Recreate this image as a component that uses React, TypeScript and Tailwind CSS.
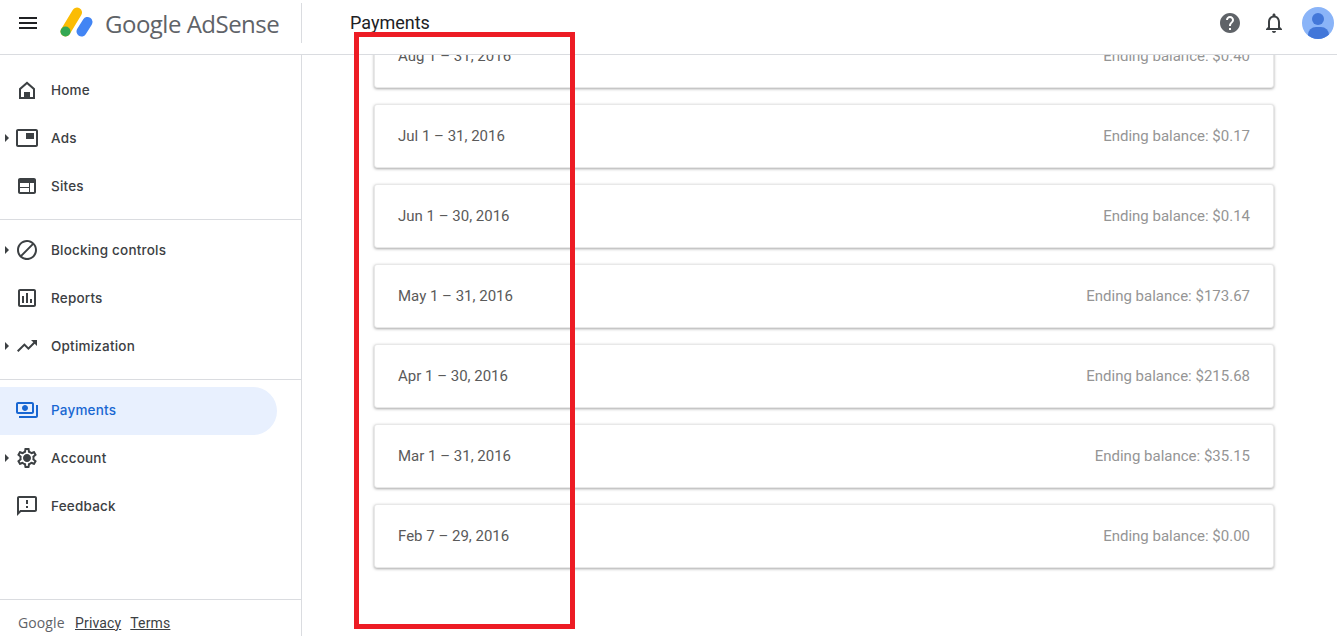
import type { ReactNode } from 'react';

const ICON = {
  menu: 'M3 18h18v-2H3v2zm0-5h18v-2H3v2zm0-7v2h18V6H3z',
  home: 'M12 3.5 4 10.5V21h16V10.5zM12 6.2l6 5.2V19H6v-7.6zM9 14h6v5H9z',
  ads: 'M19 7h-8v6h8V7zm2-4H3c-1.1 0-2 .9-2 2v14c0 1.1.9 1.98 2 1.98h18c1.1 0 2-.88 2-1.98V5c0-1.1-.9-2-2-2zm0 16.01H3V4.98h18v14.03z',
  sites: 'M19 4H5c-1.1 0-2 .9-2 2v12c0 1.1.9 2 2 2h14c1.1 0 2-.9 2-2V6c0-1.1-.9-2-2-2zm-5 14H5v-4h9v4zm0-5H5V9h9v4zm5 5h-4V9h4v9z',
  block: 'M12 2C6.48 2 2 6.48 2 12s4.48 10 10 10 10-4.48 10-10S17.52 2 12 2zM4 12c0-4.42 3.58-8 8-8 1.85 0 3.55.63 4.9 1.69L5.69 16.9C4.63 15.55 4 13.85 4 12zm8 8c-1.85 0-3.55-.63-4.9-1.69L18.31 7.1C19.37 8.45 20 10.15 20 12c0 4.42-3.58 8-8 8z',
  reports: 'M19 3H5c-1.1 0-2 .9-2 2v14c0 1.1.9 2 2 2h14c1.1 0 2-.9 2-2V5c0-1.1-.9-2-2-2zm0 16H5V5h14v14zM7 10h2v7H7zm4-3h2v10h-2zm4 6h2v4h-2z',
  trending: 'M16 6l2.29 2.29-4.88 4.88-4-4L2 16.59 3.41 18l6-6 4 4 6.3-6.29L22 12V6z',
  payments: 'M19 14V6c0-1.1-.9-2-2-2H3c-1.1 0-2 .9-2 2v8c0 1.1.9 2 2 2h14c1.1 0 2-.9 2-2zm-2 0H3V6h14v8zm-7-7c-1.66 0-3 1.34-3 3s1.34 3 3 3 3-1.34 3-3-1.34-3-3-3zm13 0v11c0 1.1-.9 2-2 2H4v-2h17V7h2z',
  settings: 'M19.43 12.98c.04-.32.07-.64.07-.98 0-.34-.03-.66-.07-.98l2.11-1.65c.19-.15.24-.42.12-.64l-2-3.46c-.09-.16-.26-.25-.44-.25-.06 0-.12.01-.17.03l-2.49 1c-.52-.4-1.08-.73-1.69-.98l-.38-2.65C14.46 2.18 14.25 2 14 2h-4c-.25 0-.46.18-.49.42l-.38 2.65c-.61.25-1.17.59-1.69.98l-2.49-1c-.06-.02-.12-.03-.18-.03-.17 0-.34.09-.43.25l-2 3.46c-.13.22-.07.49.12.64l2.11 1.65c-.04.32-.07.65-.07.98 0 .33.03.66.07.98l-2.11 1.65c-.19.15-.24.42-.12.64l2 3.46c.09.16.26.25.44.25.06 0 .12-.01.17-.03l2.49-1c.52.4 1.08.73 1.69.98l.38 2.65c.03.24.24.42.49.42h4c.25 0 .46-.18.49-.42l.38-2.65c.61-.25 1.17-.59 1.69-.98l2.49 1c.06.02.12.03.18.03.17 0 .34-.09.43-.25l2-3.46c.12-.22.07-.49-.12-.64l-2.11-1.65zm-1.98-1.71c.04.31.05.52.05.73 0 .21-.02.43-.05.73l-.14 1.13.89.7 1.08.84-.7 1.21-1.27-.51-1.04-.42-.9.68c-.43.32-.84.56-1.25.73l-1.06.43-.16 1.13-.2 1.35h-1.4l-.19-1.35-.16-1.13-1.06-.43c-.43-.18-.83-.41-1.23-.71l-.91-.7-1.06.43-1.27.51-.7-1.21 1.08-.84.89-.7-.14-1.13c-.03-.31-.05-.54-.05-.74s.02-.43.05-.73l.14-1.13-.89-.7-1.08-.84.7-1.21 1.27.51 1.04.42.9-.68c.43-.32.84-.56 1.25-.73l1.06-.43.16-1.13.2-1.35h1.39l.19 1.35.16 1.13 1.06.43c.43.18.83.41 1.23.71l.91.7 1.06-.43 1.27-.51.7 1.21-1.07.85-.89.7.14 1.13zM12 8c-2.21 0-4 1.79-4 4s1.79 4 4 4 4-1.79 4-4-1.79-4-4-4z',
  feedback: 'M20 2H4c-1.1 0-1.99.9-1.99 2L2 22l4-4h14c1.1 0 2-.9 2-2V4c0-1.1-.9-2-2-2zm0 14H5.17L4 17.17V4h16v12zm-9-4h2v2h-2zm0-6h2v4h-2z',
  help: 'M12 2C6.48 2 2 6.48 2 12s4.48 10 10 10 10-4.48 10-10S17.52 2 12 2zm1 17h-2v-2h2v2zm2.07-7.75l-.9.92C13.45 12.9 13 13.5 13 15h-2v-.5c0-1.1.45-2.1 1.17-2.83l1.24-1.26c.37-.36.59-.86.59-1.41 0-1.1-.9-2-2-2s-2 .9-2 2H8c0-2.21 1.79-4 4-4s4 1.79 4 4c0 .88-.36 1.68-.93 2.25z',
  bell: 'M12 22c1.1 0 2-.9 2-2h-4c0 1.1.9 2 2 2zm6-6v-5c0-3.07-1.63-5.64-4.5-6.32V4c0-.83-.67-1.5-1.5-1.5s-1.5.67-1.5 1.5v.68C7.64 5.36 6 7.92 6 11v5l-2 2v1h16v-1l-2-2zm-2 1H8v-6c0-2.48 1.51-4.5 4-4.5s4 2.02 4 4.5v6z',
};

function Icon({ d, className }: { d: string; className?: string }) {
  return (
    <svg viewBox="0 0 24 24" className={className} fill="currentColor">
      <path d={d} />
    </svg>
  );
}

function NavItem({ icon, label, caret, active }: { icon: string; label: string; caret?: boolean; active?: boolean }) {
  return (
    <div
      className={
        'relative flex h-12 w-[277px] items-center rounded-r-3xl pl-[15px] ' +
        (active ? 'bg-[#e8f0fe] pb-[2px] text-[#1967d2]' : 'text-[#3c4043]')
      }
    >
      {caret && <span className="absolute left-[5px] h-0 w-0 border-y-[4px] border-l-[4px] border-y-transparent border-l-[#3c4043]" />}
      <Icon d={icon} className="h-6 w-6 shrink-0" />
      <span className="ml-3 font-['Inter',sans-serif] text-[13.5px] font-medium tracking-[0.2px]">{label}</span>
    </div>
  );
}

function NavGroup({ children, className }: { children: ReactNode; className: string }) {
  return <div className={className}>{children}</div>;
}

const statements = [
  { period: 'Aug 1 – 31, 2016', balance: '$0.40' },
  { period: 'Jul 1 – 31, 2016', balance: '$0.17' },
  { period: 'Jun 1 – 30, 2016', balance: '$0.14' },
  { period: 'May 1 – 31, 2016', balance: '$173.67' },
  { period: 'Apr 1 – 30, 2016', balance: '$215.68' },
  { period: 'Mar 1 – 31, 2016', balance: '$35.15' },
  { period: 'Feb 7 – 29, 2016', balance: '$0.00' },
];

export default function App() {
  return (
    <div className="relative flex h-screen flex-col overflow-hidden bg-white font-['Roboto',sans-serif]">
      {/* Top bar */}
      <header className="relative z-10 flex h-[55px] shrink-0 items-center border-b border-[#dadce0] bg-white pb-[8px]">
        <Icon d={ICON.menu} className="ml-4 h-6 w-6 text-[#202124]" />
        <svg viewBox="0 0 36 34" className="ml-[18px] h-[34px] w-[36px] shrink-0">
          <line x1="7.5" y1="25.5" x2="19" y2="6.5" stroke="#fbbc04" strokeWidth="10" strokeLinecap="round" />
          <circle cx="7.5" cy="25.5" r="5" fill="#34a853" />
          <line x1="23.5" y1="25.5" x2="29.5" y2="16" stroke="#4285f4" strokeWidth="10" strokeLinecap="round" />
        </svg>
        <span className="ml-[11px] w-[196px] shrink-0 pt-[2px] font-['Open_Sans',sans-serif] text-[24px] tracking-[-0.5px] text-[#5f6368]">Google AdSense</span>
        <div className="h-10 w-px shrink-0 bg-[#dadce0]" />
        <h1 className="ml-[48px] pb-[2px] text-[18px] text-[#202124]">Payments</h1>
        <div className="ml-auto flex items-center">
          <Icon d={ICON.help} className="h-6 w-6 text-[#5f6368]" />
          <Icon d={ICON.bell} className="ml-[20px] h-6 w-6 text-[#3c4043]" />
          <div className="relative ml-[16px] mr-[3px] h-8 w-8 overflow-hidden rounded-full bg-[#8ab4f8]">
            <div className="mx-auto mt-[6px] h-[12px] w-[12px] rounded-full bg-[#4277d9]" />
            <div className="mx-auto mt-[2px] h-[16px] w-[21px] rounded-full bg-[#4277d9]" />
          </div>
        </div>
      </header>

      <div className="flex min-h-0 flex-1">
        {/* Sidebar */}
        <aside className="flex w-[302px] shrink-0 flex-col border-r border-[#dadce0]">
          <NavGroup className="border-b border-[#dadce0] pb-[9px] pt-[11px]">
            <NavItem icon={ICON.home} label="Home" />
            <NavItem icon={ICON.ads} label="Ads" caret />
            <NavItem icon={ICON.sites} label="Sites" />
          </NavGroup>
          <NavGroup className="border-b border-[#dadce0] pb-[9px] pt-[6px]">
            <NavItem icon={ICON.block} label="Blocking controls" caret />
            <NavItem icon={ICON.reports} label="Reports" />
            <NavItem icon={ICON.trending} label="Optimization" caret />
          </NavGroup>
          <NavGroup className="pt-[7px]">
            <NavItem icon={ICON.payments} label="Payments" active />
            <div className="-mt-px">
              <NavItem icon={ICON.settings} label="Account" caret />
              <NavItem icon={ICON.feedback} label="Feedback" />
            </div>
          </NavGroup>
          <footer className="mt-auto flex h-[37px] items-center border-t border-[#dadce0] pl-[18px] pt-[10px] text-[14px] tracking-[0.15px] text-[#3c4043]">
            <span className="w-[57px] pb-[2px] font-['Open_Sans',sans-serif] text-[14px] tracking-[0.1px] text-[#5f6368]">Google</span>
            <a className="underline">Privacy</a>
            <a className="ml-[9px] underline">Terms</a>
          </footer>
        </aside>

        {/* Statements */}
        <main className="min-w-0 flex-1 overflow-hidden pl-[72px] pr-[63px]">
          <div className="-mt-[31px] flex flex-col gap-4">
            {statements.map((s) => (
              <div
                key={s.period}
                className="flex h-16 items-center justify-between rounded-[3px] border border-[#e8e8e8] bg-white px-[23px] text-[15px] shadow-[0_1px_3px_rgba(0,0,0,0.35)]"
              >
                <span className="text-[#5a5a5a]">{s.period}</span>
                <span className="text-[#959595]">Ending balance: {s.balance}</span>
              </div>
            ))}
          </div>
        </main>
      </div>

      {/* Annotation drawn over the screenshot */}
      <div className="absolute left-[354px] top-[32px] z-20 h-[597px] w-[221px] border-[5px] border-[#ed1c24]" />
    </div>
  );
}
